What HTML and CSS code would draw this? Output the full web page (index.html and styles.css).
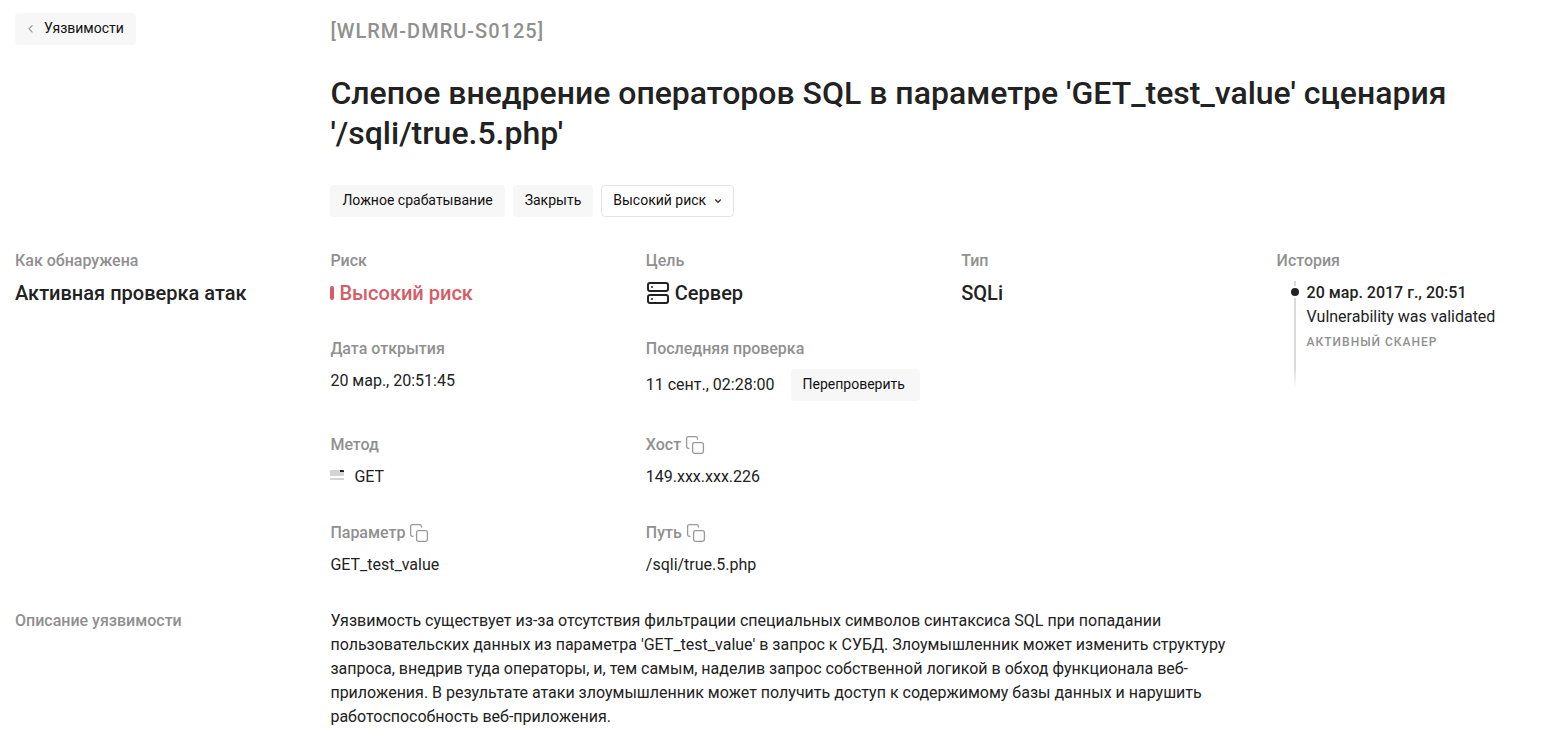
FILE: index.html
```html
<!DOCTYPE html>
<html lang="ru">
<head>
<meta charset="utf-8">
<title>Уязвимость WLRM-DMRU-S0125</title>
<link rel="stylesheet" href="styles.css">
</head>
<body>
<main class="page">
  <header class="row header">
    <nav><a class="btn back" href="#"><svg width="7" height="10" viewBox="0 0 7 10"><path d="M5.500 2.300 2 5.800l3.500 3.500" fill="none" stroke="#999" stroke-width="1.200"/></svg>Уязвимости</a></nav>
    <div class="heading">
      <p class="code">[WLRM-DMRU-S0125]</p>
      <h1 class="title">Слепое внедрение операторов SQL в параметре 'GET_test_value' сценария '/sqli/true.5.php'</h1>
      <div class="actions">
        <button class="btn" type="button">Ложное срабатывание</button>
        <button class="btn" type="button">Закрыть</button>
        <div class="picker">
          <select class="btn outlined" aria-label="Уровень риска"><option>Высокий риск</option></select>
          <svg class="chevron" width="8" height="8" viewBox="0 0 8 8"><path d="m1.200 2.500 2.800 2.800 2.800-2.800" fill="none" stroke="#333" stroke-width="1.300"/></svg>
        </div>
      </div>
    </div>
  </header>
  <div class="row details">
    <section>
      <h2 class="label">Как обнаружена</h2>
      <p class="big">Активная проверка атак</p>
    </section>
    <div class="facts">
      <section><h2 class="label">Риск</h2><p class="big risk"><span class="mark"></span>Высокий риск</p></section>
      <section><h2 class="label">Цель</h2><p class="big target"><svg width="24" height="24" viewBox="0 0 24 24" fill="none" stroke="#222" stroke-width="2"><rect x="2" y="2" width="20" height="8" rx="2"/><rect x="2" y="14" width="20" height="8" rx="2"/><path d="M5 6h2M5 18h2" stroke-width="1.600"/></svg>Сервер</p></section>
      <section><h2 class="label">Тип</h2><p class="big">SQLi</p></section>
      <section><h2 class="label">Дата открытия</h2><p class="value">20 мар., 20:51:45</p></section>
      <section class="wide"><h2 class="label">Последняя проверка</h2><p class="value check">11 сент., 02:28:00<button class="btn" type="button">Перепроверить</button></p></section>
      <section><h2 class="label">Метод</h2><p class="value method"><svg width="14" height="14" viewBox="0 0 14 14"><rect width="14" height="6" rx="1" fill="#d3d3d3"/><path fill="#d3d3d3" d="M0 8h14v2H0z"/><path fill="#222" d="M10 0h3a1 1 0 0 1 1 1v1h-4z"/></svg>GET</p></section>
      <section class="wide"><h2 class="label">Хост<button class="copy" type="button" aria-label="Копировать хост"><svg width="20" height="20" viewBox="0 0 20 20" fill="none" stroke="#999" stroke-width="1.300"><rect x="7.600" y="7.600" width="10.800" height="10.800" rx="1.800"/><path d="M4.500 13.400H3.400a1.800 1.800 0 0 1-1.800-1.800V3.400a1.800 1.800 0 0 1 1.800-1.800h7.200a1.800 1.800 0 0 1 1.800 1.800v1.100"/></svg></button></h2><p class="value">149.xxx.xxx.226</p></section>
      <section><h2 class="label">Параметр<button class="copy" type="button" aria-label="Копировать параметр"><svg width="20" height="20" viewBox="0 0 20 20" fill="none" stroke="#999" stroke-width="1.300"><rect x="7.600" y="7.600" width="10.800" height="10.800" rx="1.800"/><path d="M4.500 13.400H3.400a1.800 1.800 0 0 1-1.800-1.800V3.400a1.800 1.800 0 0 1 1.800-1.800h7.200a1.800 1.800 0 0 1 1.800 1.800v1.100"/></svg></button></h2><p class="value">GET_test_value</p></section>
      <section class="wide"><h2 class="label">Путь<button class="copy" type="button" aria-label="Копировать путь"><svg width="20" height="20" viewBox="0 0 20 20" fill="none" stroke="#999" stroke-width="1.300"><rect x="7.600" y="7.600" width="10.800" height="10.800" rx="1.800"/><path d="M4.500 13.400H3.400a1.800 1.800 0 0 1-1.800-1.800V3.400a1.800 1.800 0 0 1 1.800-1.800h7.200a1.800 1.800 0 0 1 1.800 1.800v1.100"/></svg></button></h2><p class="value">/sqli/true.5.php</p></section>
    </div>
    <aside>
      <h2 class="label">История</h2>
      <ol class="timeline">
        <li class="event"><span class="rail"><span class="dot"></span></span><div class="entry"><time class="when" datetime="2017-03-20T20:51">20 мар. 2017 г., 20:51</time><p class="what">Vulnerability was validated</p><p class="who">Активный сканер</p></div></li>
      </ol>
    </aside>
  </div>
  <section class="row about">
    <h2 class="label">Описание уязвимости</h2>
    <p class="description">Уязвимость существует из-за отсутствия фильтрации специальных символов синтаксиса SQL при попадании пользовательских данных из параметра 'GET_test_value' в запрос к СУБД. Злоумышленник может изменить структуру запроса, внедрив туда операторы, и, тем самым, наделив запрос собственной логикой в обход функционала веб-приложения. В результате атаки злоумышленник может получить доступ к содержимому базы данных и нарушить работоспособность веб-приложения.</p>
  </section>
</main>
</body>
</html>
```
FILE: styles.css
```css
* { box-sizing: border-box; }
body { margin: 0; background: #fff; color: #222; font: 16px/24px Roboto, sans-serif; }
h1, h2, p, ol { margin: 0; padding: 0; font-weight: 400; }
svg { display: block; flex: none; }
.page { padding: 13px 0 8px 15px; }
.row { display: grid; grid-template-columns: repeat(5, minmax(0, 1fr)); column-gap: 49px; }
.row nav { display: flex; align-items: flex-start; }
.heading { grid-column: 2 / -1; padding-top: 6px; }
.code { color: #909090; font-size: 20px; line-height: 24px; font-weight: 500; letter-spacing: 1px; }
.title { margin-top: 30px; padding-right: 48px; font-size: 32px; line-height: 40px; font-weight: 500; }
.actions { display: flex; gap: 8px; margin-top: 32px; }
.btn { display: inline-flex; align-items: center; height: 32px; padding: 0 12px 2px; border: 0; border-radius: 4px; background: #f7f7f7; color: #111; font: 14px/20px Roboto, sans-serif; text-decoration: none; white-space: nowrap; }
.back { gap: 10px; }
.picker { display: grid; align-items: center; }
.outlined { grid-area: 1 / 1; appearance: none; padding: 0 27px 2px 11px; border: 1px solid #e5e5e5; background: #fff; }
.chevron { grid-area: 1 / 1; justify-self: end; margin-right: 12px; pointer-events: none; }
.details, .about { margin-top: 32px; }
.facts { grid-column: 2 / 5; display: grid; grid-template-columns: repeat(3, minmax(0, 1fr)); column-gap: 49px; row-gap: 32px; }
.wide { grid-column: 2 / 4; }
.label { display: flex; align-items: center; gap: 4px; height: 24px; color: #909090; font-size: 16px; line-height: 24px; font-weight: 500; }
.big { margin-top: 8px; font-size: 20px; line-height: 24px; font-weight: 500; }
.risk, .target, .check, .method { display: flex; align-items: center; }
.risk { gap: 5px; color: #d65c65; }
.mark { width: 4px; height: 14px; border-radius: 2px; background: #d65c65; }
.target { gap: 5px; }
.value { margin-top: 8px; }
.check { gap: 16px; }
.check .btn { padding: 0 15px 2px 12px; }
.method { gap: 10px; }
.copy { padding: 0; border: 0; background: none; }
.timeline { margin-top: 8px; list-style: none; }
.event { display: flex; gap: 6px; margin-left: 12px; }
.rail { display: flex; justify-content: center; width: 12px; height: 108px; background: linear-gradient(#d9d9d9 80%, #fff) center / 2px 100% no-repeat; }
.dot { width: 12px; height: 12px; margin-top: 5px; border: 2px solid #fff; border-radius: 50%; background: #222; }
.when { display: block; font-weight: 500; }
.who { margin-top: 1px; color: #909090; font-size: 12px; font-weight: 500; letter-spacing: 1px; text-transform: uppercase; }
.description { grid-column: 2 / 5; }
```
